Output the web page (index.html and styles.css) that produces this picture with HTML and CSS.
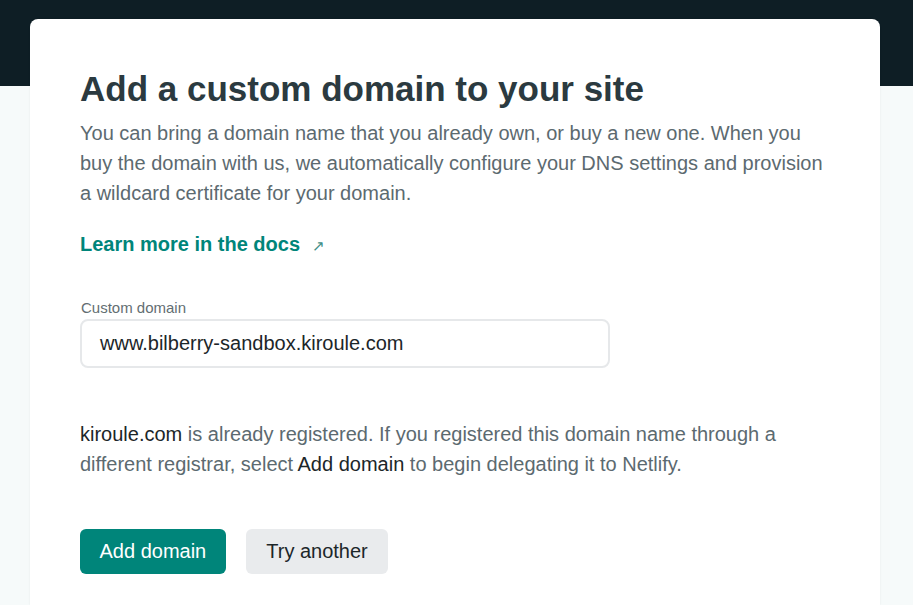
FILE: index.html
```html
<!DOCTYPE html>
<html>
<head>
<meta charset="utf-8">
<link rel="stylesheet" href="styles.css">
</head>
<body>
<div class="topbar"></div>
<main class="card">
  <h1 class="title">Add a custom domain to your site</h1>
  <p class="lead">You can bring a domain name that you already own, or buy a new one. When you buy the domain with us, we automatically configure your DNS settings and provision a wildcard certificate for your domain.</p>
  <a class="doclink" href="#">Learn more in the docs <span class="arrow">↗</span></a>
  <label class="field">
    <span class="field-label">Custom domain</span>
    <span class="input">www.bilberry-sandbox.kiroule.com</span>
  </label>
  <p class="notice"><span class="strong">kiroule.com</span> is already registered. If you registered this domain name through a different registrar, select <span class="strong">Add domain</span> to begin delegating it to Netlify.</p>
  <div class="actions">
    <button class="btn btn-primary">Add domain</button>
    <button class="btn btn-secondary">Try another</button>
  </div>
</main>
</body>
</html>
```
FILE: styles.css
```css
html, body {
  margin: 0;
  padding: 0;
}
body {
  background: #f6fafa;
  font-family: "Liberation Sans", Arial, sans-serif;
  height: 605px;
  overflow: hidden;
  position: relative;
}
.topbar {
  height: 86px;
  background: #0e1e25;
}
.card {
  position: absolute;
  top: 19px;
  left: 30px;
  width: 850px;
  height: 586px;
  box-sizing: border-box;
  background: #ffffff;
  border-radius: 8px 8px 0 0;
  padding: 50px 50px 0 50px;
  box-shadow: 0 0 2px rgba(14, 30, 37, 0.08);
}
.title {
  margin: 0;
  font-size: 35px;
  line-height: 40px;
  font-weight: 700;
  color: #2b3a40;
}
.lead {
  margin: 9px 0 0 0;
  font-size: 20px;
  line-height: 30px;
  color: #5c6a70;
}
.doclink {
  display: inline-block;
  margin-top: 21px;
  font-size: 20px;
  line-height: 30px;
  font-weight: 700;
  color: #00857a;
  text-decoration: none;
}
.arrow {
  font-size: 15px;
  font-weight: 400;
  margin-left: 6px;
  color: #3f8f88;
}
.field {
  display: flex;
  flex-direction: column;
  margin-top: 37px;
  width: 530px;
}
.field-label {
  font-size: 15px;
  line-height: 20px;
  color: #636e72;
  margin-left: 1px;
}
.input {
  display: block;
  margin-top: 1px;
  height: 49px;
  box-sizing: border-box;
  border: 2px solid #e6e8ea;
  border-radius: 8px;
  padding: 9px 18px;
  font-size: 20px;
  line-height: 27px;
  color: #1c2629;
}
.notice {
  margin: 51px 0 0 0;
  font-size: 20px;
  line-height: 30px;
  color: #5c6a70;
}
.strong {
  color: #1c2629;
}
.actions {
  display: flex;
  gap: 20px;
  margin-top: 50px;
}
.btn {
  font-family: "Liberation Sans", Arial, sans-serif;
  font-size: 20px;
  line-height: 25px;
  height: 45px;
  border: none;
  border-radius: 6px;
  cursor: pointer;
}
.btn-primary {
  padding: 0 19.5px;
  background: #00857a;
  color: #ffffff;
}
.btn-secondary {
  padding: 0 20.5px;
  background: #e9ebed;
  color: #1c2629;
}
```
